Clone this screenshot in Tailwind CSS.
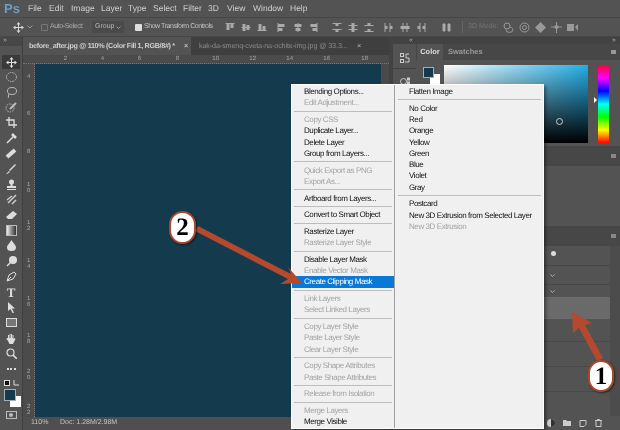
<!DOCTYPE html>
<html>
  <head>
    <meta charset="UTF-8" />
    <title>Photoshop</title>
    <script src="https://cdn.jsdelivr.net/npm/@tailwindcss/browser@4"></script>
  </head>
  <body class="bg-[#535353]">
    <div class="relative w-[620px] h-[430px] overflow-hidden flex flex-col font-['Liberation_Sans',sans-serif] [text-rendering:geometricPrecision] text-[7.5px] text-[#d6d6d6] bg-[#535353] blur-[0.3px]">
      <!-- menu bar -->
      <div class="h-[17px] flex items-center shrink-0 text-[8.5px] text-[#cfcfcf]">
        <span class="w-[28px] pl-[4px] font-bold text-[13px] text-[#6d9ec4]">Ps</span>
        <span class="w-[21px]">File</span>
        <span class="w-[22px]">Edit</span>
        <span class="w-[30px]">Image</span>
        <span class="w-[27px]">Layer</span>
        <span class="w-[25px]">Type</span>
        <span class="w-[30px]">Select</span>
        <span class="w-[25px]">Filter</span>
        <span class="w-[19px]">3D</span>
        <span class="w-[26px]">View</span>
        <span class="w-[37px]">Window</span>
        <span>Help</span>
      </div>

      <!-- options bar -->
      <div class="h-[20px] flex items-center shrink-0 border-y border-[#474747] whitespace-nowrap">
        <svg class="ml-[13px] shrink-0" width="11" height="11" viewBox="0 0 11 11" fill="#d8d8d8"><path d="M5.500 0 7.500 2.500H6V5h2.500V3.500L11 5.500 8.500 7.500V6H6v2.500h1.500L5.500 11l-2-2.500H5V6H2.500v1.500L0 5.500l2.500-2V5H5V2.500H3.500z"/></svg>
        <svg class="ml-[3px] shrink-0" width="6" height="4" viewBox="0 0 6 4" fill="none" stroke="#999"><path d="M.5.500 3 3 5.500.500"/></svg>
        <span class="ml-[8px] w-[7px] h-[7px] border border-[#777] rounded-[1px] shrink-0"></span>
        <span class="ml-[2px] w-[34px] shrink-0 text-[7px] text-[#aaa] tracking-[-0.4px]">Auto-Select:</span>
        <span class="ml-[8px] w-[32px] h-[12px] shrink-0 bg-[#4a4a4a] flex items-center justify-between px-[3px] text-[7px] text-[#b8b8b8]">Group<svg width="5" height="3" viewBox="0 0 5 3" fill="none" stroke="#999"><path d="M.5.500 2.500 2.500 4.500.500"/></svg></span>
        <span class="ml-[11px] w-[7px] h-[7px] bg-[#ddd] rounded-[1px] shrink-0"></span>
        <span class="ml-[2px] w-[78px] shrink-0 text-[7px] text-[#c4c4c4] tracking-[-0.45px]">Show Transform Controls</span>
        <div class="flex items-center shrink-0 text-[#aaa] [&>svg]:w-[16px] [&>svg]:h-[9px] [&>svg]:fill-[#aaa]">
          <svg viewBox="-3.500 0 16 9"><path d="M0 0h9v1H0zM1 1h3v6H1zM5 1h3v4H5z"/></svg>
          <svg viewBox="-3.500 0 16 9"><path d="M0 4h9v1H0zM1 1h3v7H1zM5 2h3v5H5z"/></svg>
          <svg viewBox="-3.500 0 16 9"><path d="M0 7h9v1H0zM1 1h3v6H1zM5 3h3v4H5z"/></svg>
          <svg class="ml-[4px]" viewBox="-3.500 0 16 9"><path d="M0 0h1v9H0zM1 1h6v3H1zM1 5h4v3H1z"/></svg>
          <svg viewBox="-3.500 0 16 9"><path d="M4 0h1v9H4zM1 1h7v3H1zM2 5h5v3H2z"/></svg>
          <svg viewBox="-3.500 0 16 9"><path d="M7 0h1v9H7zM1 1h6v3H1zM3 5h4v3H3z"/></svg>
          <svg class="ml-[7px]" viewBox="-3.500 0 16 9"><path d="M0 0h9v1H0zM0 6h9v1H0zM3 1h3v2H3zM3 7h3v2H3z"/></svg>
          <svg viewBox="-3.500 0 16 9"><path d="M0 2h9v1H0zM0 6h9v1H0zM3 0h3v9H3z"/></svg>
          <svg viewBox="-3.500 0 16 9"><path d="M0 2h9v1H0zM0 8h9v1H0zM3 0h3v2H3zM3 6h3v2H3z"/></svg>
          <svg class="ml-[4px]" viewBox="-3.500 0 16 9"><path d="M0 0h1v9H0zM5 0h1v9H5zM1 3h2v3H1zM6 3h2v3H6z"/></svg>
          <svg viewBox="-3.500 0 16 9"><path d="M2 0h1v9H2zM6 0h1v9H6zM0 3h9v3H0z"/></svg>
          <svg viewBox="-3.500 0 16 9"><path d="M3 0h1v9H3zM8 0h1v9H8zM1 3h2v3H1zM6 3h2v3H6z"/></svg>
          <svg class="ml-[10px]" viewBox="-3.500 0 16 9"><path d="M0 1h3v7H0zM5 1h3v7H5zM1 0h1v9H1zM6 0h1v9H6z"/></svg>
        </div>
        <span class="ml-[7px] h-[12px] border-l border-[#666]"></span>
        <span class="ml-[5px] w-[31px] shrink-0 text-[7px] text-[#777]">3D Mode:</span>
        <div class="ml-[4px] flex items-center gap-[5px]">
          <svg width="11" height="11" viewBox="0 0 11 11" fill="none" stroke="#999"><circle cx="4" cy="4" r="3"/><path d="M3 7.500a3 2.500 0 1 0 7 0 3 2.500 0 0 0-4-2"/></svg>
          <svg width="11" height="11" viewBox="0 0 11 11" fill="none" stroke="#999"><circle cx="5.500" cy="5.500" r="4.500"/><circle cx="5.500" cy="5.500" r="2"/></svg>
          <svg width="11" height="11" viewBox="0 0 11 11" fill="#999"><path d="M5.500 0 11 5.500 5.500 11 0 5.500z"/></svg>
          <svg width="11" height="11" viewBox="0 0 11 11" fill="#999"><path d="M5 0h1v4.500h5v1H6V11H5V5.500H0v-1h5z"/><circle cx="5.500" cy="5" r="2"/></svg>
          <svg width="11" height="9" viewBox="0 0 11 9" fill="#999"><rect y="1" width="7" height="7"/><path d="m8 4 3-3v7z"/></svg>
        </div>
      </div>

      <!-- workspace -->
      <div class="flex-1 flex min-h-0">
        <!-- tools -->
        <div class="w-[23px] shrink-0 flex flex-col items-center border-r border-[#3f3f3f]">
          <div class="w-full h-[9px] mb-[9px] bg-[#474747] text-[7px] leading-[8px] pl-[3px] text-[#aaa] shrink-0">»</div>
          <div class="w-[18px] h-[14px] bg-[#3a3a3a] flex items-center justify-center shrink-0">
            <svg width="11" height="11" viewBox="0 0 11 11" fill="#e2e2e2"><path d="M5.500 0 7.500 2.500H6V5h2.500V3.500L11 5.500 8.500 7.500V6H6v2.500h1.500L5.500 11l-2-2.500H5V6H2.500v1.500L0 5.500l2.500-2V5H5V2.500H3.500z"/></svg>
          </div>
          <div class="grid auto-rows-[15.4px] justify-items-center items-center">
            <svg width="11" height="10" viewBox="0 0 11 10" fill="none" stroke="#bbb" stroke-dasharray="1.500 1"><ellipse cx="5.500" cy="5" rx="5" ry="4.500"/></svg>
            <svg width="11" height="11" viewBox="0 0 11 11" fill="none" stroke="#bbb"><ellipse cx="6" cy="4" rx="4.500" ry="3.500"/><path d="M3 7c-1 1 0 3-1 4"/></svg>
            <svg width="12" height="11" viewBox="0 0 12 11" fill="none" stroke="#bbb" stroke-dasharray="1.500 1"><circle cx="5" cy="6" r="4"/><path d="M5 7 11 1" stroke-dasharray="none" stroke-width="2"/></svg>
            <svg width="11" height="11" viewBox="0 0 11 11" fill="none" stroke="#ddd" stroke-width="1.300"><path d="M3 0v8h8M0 3h8v8"/></svg>
            <svg width="11" height="11" viewBox="0 0 11 11" fill="none" stroke="#ddd" stroke-width="1.500"><path d="M8 3 2 9l-1 1"/><path d="m6 1 4 4" stroke-width="2.500"/></svg>
            <svg width="12" height="11" viewBox="0 0 12 11" fill="none" stroke="#ddd" stroke-width="4"><path d="m2 9 8-7"/></svg>
            <svg width="10" height="10" viewBox="0 0 10 10" fill="#ddd"><path d="M9 0 10 1 4 7 3 6zM3 7 4 8 1 10 0 10z"/></svg>
            <svg width="11" height="11" viewBox="0 0 11 11" fill="#ddd"><circle cx="5.500" cy="3" r="2.500"/><rect x="4.500" y="4" width="2" height="3"/><rect x="1" y="7" width="9" height="2"/><rect x="1" y="10" width="9" height="1"/></svg>
            <svg width="11" height="11" viewBox="0 0 11 11" fill="none" stroke="#ccc" stroke-width="1.500"><path d="M10 1 2 9M6 2 1 6M10 6l-4 4"/></svg>
            <svg width="11" height="9" viewBox="0 0 11 9" fill="#ddd"><path d="M7 0 11 3 6 8 2 8 0 6z"/></svg>
            <div class="w-[11px] h-[11px] bg-gradient-to-r from-[#eee] to-[#333] border border-[#bbb]"></div>
            <svg width="9" height="11" viewBox="0 0 9 11" fill="#ddd"><path d="M4.500 0C6 3 9 5 9 7.500a4.500 3.500 0 0 1-9 0C0 5 3 3 4.500 0z"/></svg>
            <svg width="11" height="11" viewBox="0 0 11 11" fill="#ddd"><circle cx="7" cy="4" r="4"/><path d="M5 6 1 10" stroke="#ddd" stroke-width="1.500"/></svg>
            <svg width="11" height="11" viewBox="0 0 11 11" fill="none" stroke="#ddd"><path d="M1 10 3 4l5-3 2 2-3 5zM1 10l4-4"/></svg>
            <span class="font-['Liberation_Serif',serif] font-bold text-[13px] leading-[11px] text-[#ddd]">T</span>
            <svg width="9" height="11" viewBox="0 0 9 11" fill="#ddd"><path d="M1 0 8 6.500H5L7 11H5.500L3.500 7 1 9z"/></svg>
            <div class="w-[11px] h-[9px] border border-[#ddd] bg-[#777]"></div>
            <svg width="11" height="11" viewBox="0 0 11 11" fill="#ddd"><path d="M2 5V2h1v3h.500V1h1v4H5V1h1v4h.500V2h1v4l1-1 1 1-2 4-1 2H4L2 8 .500 6 1 5z"/></svg>
            <svg width="11" height="11" viewBox="0 0 11 11" fill="none" stroke="#ddd" stroke-width="1.200"><circle cx="4.500" cy="4.500" r="3.500"/><path d="m7 7 4 4" stroke-width="1.600"/></svg>
            <div class="flex gap-[1.500px]"><span class="w-[2px] h-[2px] bg-[#ddd]"></span><span class="w-[2px] h-[2px] bg-[#ddd]"></span><span class="w-[2px] h-[2px] bg-[#ddd]"></span></div>
          </div>
          <div class="relative w-[18px] h-[28px] mt-[3px] shrink-0">
            <span class="absolute left-[2px] top-[0px] w-[6px] h-[6px] bg-[#111] border border-[#ddd]"></span>
            <svg class="absolute left-[11px] top-[0px]" width="6" height="6" viewBox="0 0 6 6" fill="none" stroke="#ddd"><path d="M1 0v5h5"/></svg>
            <span class="absolute left-[8px] top-[16px] w-[11px] h-[11px] bg-white"></span>
            <span class="absolute left-[2px] top-[9px] w-[12px] h-[12px] bg-[#143a4e] border border-[#9fb0b8]"></span>
          </div>
          <div class="w-[11px] h-[8px] mt-[3px] border border-[#bbb] flex items-center justify-center shrink-0"><span class="w-[4px] h-[4px] rounded-full bg-[#bbb]"></span></div>
        </div>

        <!-- document area -->
        <div class="w-[366px] shrink-0 flex flex-col">
          <div class="h-[18px] flex shrink-0 bg-[#3f3f3f] whitespace-nowrap">
            <div class="w-[168px] bg-[#535353] flex items-center pl-[6px] font-bold text-[7.2px] text-[#cfcfcf] tracking-[-0.33px]">
              <span class="w-[155px] shrink-0">before_after.jpg @ 110% (Color Fill 1, RGB/8#) *</span><span class="text-[#bbb]">×</span>
            </div>
            <div class="flex-1 flex items-center pl-[8px] text-[7.2px] text-[#8b8b8b] tracking-[-0.12px]">
              <span class="w-[158px] shrink-0">kak-da-smenq-cveta-na-ochite-img.jpg @ 33.3...</span><span class="text-[#bbb]">×</span>
            </div>
          </div>
          <div class="h-[9px] shrink-0 flex bg-[#4b4b4b] text-[6px] leading-[8px] text-[#a8a8a8] border-b border-dotted border-[#777]">
            <span class="w-[44px] text-right">2</span><span class="w-[37px] text-right">4</span><span class="w-[37px] text-right">6</span><span class="w-[38px] text-right">8</span><span class="w-[40px] text-right">10</span><span class="w-[37px] text-right">12</span><span class="w-[37px] text-right">14</span><span class="w-[37px] text-right">16</span><span class="w-[38px] text-right">18</span>
          </div>
          <div class="flex-1 flex min-h-0">
            <div class="w-[12px] shrink-0 bg-[#4b4b4b] flex flex-col text-[6px] leading-[6px] text-[#a8a8a8] pl-[4px] border-r border-dotted border-[#777]">
              <span class="h-[37px] pt-[10px] box-content">4</span><span class="h-[38px]">6</span><span class="h-[33px]">8</span><span class="h-[38px]">1<br />0</span><span class="h-[38px]">1<br />2</span><span class="h-[38px]">1<br />4</span><span class="h-[37px]">1<br />6</span><span class="h-[36px]">1<br />8</span><span class="h-[35px]">2<br />0</span><span>2<br />2</span>
            </div>
            <div class="flex-1 bg-[#143a4e]"></div>
            <div class="w-[8px] shrink-0 bg-[#4a4a4a]"></div>
          </div>
          <div class="h-[13px] shrink-0 flex items-center bg-[#4f4f4f] text-[7px] text-[#c4c4c4] pl-[8px]">
            <span class="w-[29px]">110%</span><span>Doc: 1.28M/2.98M</span>
          </div>
        </div>

        <!-- collapsed dock -->
        <div class="w-[27px] shrink-0 bg-[#424242] pl-[4px] flex flex-col">
          <div class="h-[7px] text-right text-[7px] leading-[7px] text-[#aaa] pr-[3px] shrink-0">«</div>
          <div class="h-[24px] pt-[4px] bg-[#535353] flex items-center justify-center shrink-0"><svg width="10" height="11" viewBox="0 0 10 11" fill="none" stroke="#ccc"><rect x=".500" y=".500" width="3" height="3"/><rect x=".500" y="6.500" width="3" height="3"/><path d="M9 1H6v4h3v4H5"/></svg></div>
          <div class="h-[24px] mt-[1px] bg-[#535353] flex items-center justify-center shrink-0"><svg width="10" height="9" viewBox="0 0 10 9" fill="none" stroke="#ccc"><circle cx="3.500" cy="4.500" r="3"/><rect x="7.500" y="1" width="2" height="2"/><rect x="7.500" y="5" width="2" height="2"/></svg></div>
          <div class="flex-1 bg-[#535353] mt-[3px]"></div>
        </div>

        <!-- panels -->
        <div class="flex-1 flex flex-col bg-[#424242]">
          <div class="h-[7px] shrink-0 text-right text-[7px] leading-[7px] text-[#aaa] pr-[4px]">»</div>
          <div class="h-[16px] shrink-0 flex items-center bg-[#474747] font-bold">
            <span class="w-[26px] h-[16px] ml-[1px] bg-[#535353] flex items-center justify-center text-[#ddd]">Color</span>
            <span class="ml-[5px] text-[#999]">Swatches</span>
            <span class="ml-auto mr-[4px] w-[5px] h-[4px] border-y-2 border-[#999]"></span>
          </div>
          <div class="h-[86px] shrink-0 bg-[#535353] flex pt-[5px] pl-[7px]">
            <div class="relative w-[21px] shrink-0">
              <span class="absolute left-[7px] top-[9px] w-[10px] h-[10px] bg-white"></span>
              <span class="absolute left-0 top-[2px] w-[11px] h-[11px] bg-[#143a4e] border border-[#9fb0b8]"></span>
            </div>
            <div class="relative w-[144px] h-[78px] shrink-0 bg-[linear-gradient(to_bottom,transparent,#000),linear-gradient(to_right,#fff,#22aee6)]">
              <span class="absolute left-[112px] top-[53px] w-[7px] h-[7px] rounded-full border border-[#ccc]"></span>
            </div>
            <div class="relative ml-[10px] w-[11px] h-[78px] shrink-0 bg-[linear-gradient(to_bottom,#f03,#f0f,#00f,#0ff,#0f0,#ff0,#f00)]">
              <span class="absolute left-[-4px] top-[32px] w-0 h-0 border-y-[3px] border-y-transparent border-l-[3px] border-l-white"></span>
            </div>
          </div>
          <div class="h-[20px] shrink-0 bg-[#474747] flex items-center justify-end pr-[4px]"><span class="w-[5px] h-[4px] border-y-2 border-[#888]"></span></div>
          <div class="h-[60px] shrink-0 bg-[#535353]"></div>
          <div class="h-[20px] shrink-0 bg-[#474747] flex items-center justify-end pr-[4px]"><span class="w-[5px] h-[4px] border-y-2 border-[#888]"></span></div>
          <div class="flex-1 flex flex-col bg-[#535353] min-h-0">
            <div class="flex-1 flex min-h-0">
              <div class="flex-1 flex flex-col">
                <div class="h-[20px] border-b border-[#474747] flex justify-end pr-[54px] pt-[5px]"><span class="w-[5px] h-[5px] rounded-full bg-[#ddd]"></span></div>
                <div class="h-[19px] border-b border-[#474747] flex justify-end pr-[55px] items-center"><svg width="5" height="3" viewBox="0 0 5 3" fill="none" stroke="#aaa"><path d="M.5.500 2.500 2.500 4.500.500"/></svg></div>
                <div class="h-[12px] flex justify-end pr-[55px] items-center"><svg width="5" height="3" viewBox="0 0 5 3" fill="none" stroke="#aaa"><path d="M.5.500 2.500 2.500 4.500.500"/></svg></div>
                <div class="h-[22px] bg-[#6a6a6a]"></div>
                <div class="h-[23px] border-b border-[#4a4a4a]"></div>
                <div class="h-[25px] border-b border-[#4a4a4a]"></div>
                <div class="h-[25px] border-b border-[#4a4a4a]"></div>
              </div>
              <div class="w-[10px] bg-[#4c4c4c]"></div>
            </div>
            <div class="h-[14px] shrink-0 flex items-center justify-end gap-[8px] pr-[18px]">
              <svg width="8" height="8" viewBox="0 0 7 7"><circle cx="3.500" cy="3.500" r="3.500" fill="#ccc"/><path d="M3.500 0a3.500 3.500 0 0 1 0 7z" fill="#333"/></svg>
              <svg width="8" height="6" viewBox="0 0 8 6" fill="#ccc"><path d="M0 0h3l1 1h4v5H0z"/></svg>
              <svg width="8" height="7" viewBox="0 0 7 7" fill="none" stroke="#ccc"><path d="M.500.500h6v4l-2 2h-4z"/></svg>
              <svg width="7" height="8" viewBox="0 0 7 8" fill="none" stroke="#ccc"><path d="M0 1.500h7M1 1.500v6h5v-6M2.500 1.500V.500h2v1"/></svg>
            </div>
          </div>
        </div>
      </div>

      <!-- context menu -->
      <div class="absolute left-[291px] top-[84px] w-[253px] h-[345px] flex bg-[#f0f0f0] border border-[#fff] text-[8px] tracking-[-0.42px] leading-[11.3px] text-[#111] shadow-[2px_2px_3px_rgba(0,0,0,0.4)]">
        <div class="w-[103px] h-full pt-[1px] flex flex-col border-r border-[#a0a0a0] [&>p]:pl-[12px] [&>p]:h-[11.3px] [&>p]:whitespace-nowrap [&>hr]:mx-[2px] [&>hr]:my-[2.2px] [&>hr]:border-t [&>hr]:border-[#bdbdbd]">
          <p>Blending Options...</p>
          <p class="text-[#a3a3a3]">Edit Adjustment...</p>
          <hr />
          <p class="text-[#a3a3a3]">Copy CSS</p>
          <p>Duplicate Layer...</p>
          <p>Delete Layer</p>
          <p>Group from Layers...</p>
          <hr />
          <p class="text-[#a3a3a3]">Quick Export as PNG</p>
          <p class="text-[#a3a3a3]">Export As...</p>
          <hr />
          <p>Artboard from Layers...</p>
          <hr />
          <p>Convert to Smart Object</p>
          <hr />
          <p>Rasterize Layer</p>
          <p class="text-[#a3a3a3]">Rasterize Layer Style</p>
          <hr />
          <p>Disable Layer Mask</p>
          <p class="text-[#a3a3a3]">Enable Vector Mask</p>
          <p class="bg-[#0a78d7] text-white">Create Clipping Mask</p>
          <hr />
          <p class="text-[#a3a3a3]">Link Layers</p>
          <p class="text-[#a3a3a3]">Select Linked Layers</p>
          <hr />
          <p class="text-[#a3a3a3]">Copy Layer Style</p>
          <p class="text-[#a3a3a3]">Paste Layer Style</p>
          <p class="text-[#a3a3a3]">Clear Layer Style</p>
          <hr />
          <p class="text-[#a3a3a3]">Copy Shape Attributes</p>
          <p class="text-[#a3a3a3]">Paste Shape Attributes</p>
          <hr />
          <p class="text-[#a3a3a3]">Release from Isolation</p>
          <hr />
          <p class="text-[#a3a3a3]">Merge Layers</p>
          <p>Merge Visible</p>
        </div>
        <div class="flex-1 pt-[1px] flex flex-col ml-[1px] [&>p]:pl-[13px] [&>p]:h-[11.3px] [&>p]:whitespace-nowrap [&>hr]:mx-[2px] [&>hr]:my-[2.2px] [&>hr]:border-t [&>hr]:border-[#bdbdbd]">
          <p>Flatten Image</p>
          <hr />
          <p>No Color</p>
          <p>Red</p>
          <p>Orange</p>
          <p>Yellow</p>
          <p>Green</p>
          <p>Blue</p>
          <p>Violet</p>
          <p>Gray</p>
          <hr />
          <p>Postcard</p>
          <p>New 3D Extrusion from Selected Layer</p>
          <p class="text-[#a3a3a3]">New 3D Extrusion</p>
        </div>
      </div>

      <!-- annotation arrows -->
      <svg class="absolute left-0 top-0 pointer-events-none" width="620" height="430" viewBox="0 0 620 430" fill="#b5492e">
        <path d="M198 226 291 274 288 267 302 283 280 284 288 279 195 231z" />
        <path d="M572 312 592 323 585 325 603 358 597 361 579 328 573 333z" />
      </svg>
      <div class="absolute left-[169px] top-[211px] w-[27px] h-[33px] rounded-full bg-white border-2 border-[#a8492f] shadow-[1px_1px_2px_rgba(0,0,0,0.5)] flex items-center justify-center font-['Liberation_Serif',serif] font-bold text-[25px] leading-none text-black">2</div>
      <div class="absolute left-[588px] top-[360px] w-[26px] h-[32px] rounded-full bg-white border-2 border-[#a8492f] shadow-[1px_1px_2px_rgba(0,0,0,0.5)] flex items-center justify-center font-['Liberation_Serif',serif] font-bold text-[25px] leading-none text-black">1</div>
    </div>
  </body>
</html>
